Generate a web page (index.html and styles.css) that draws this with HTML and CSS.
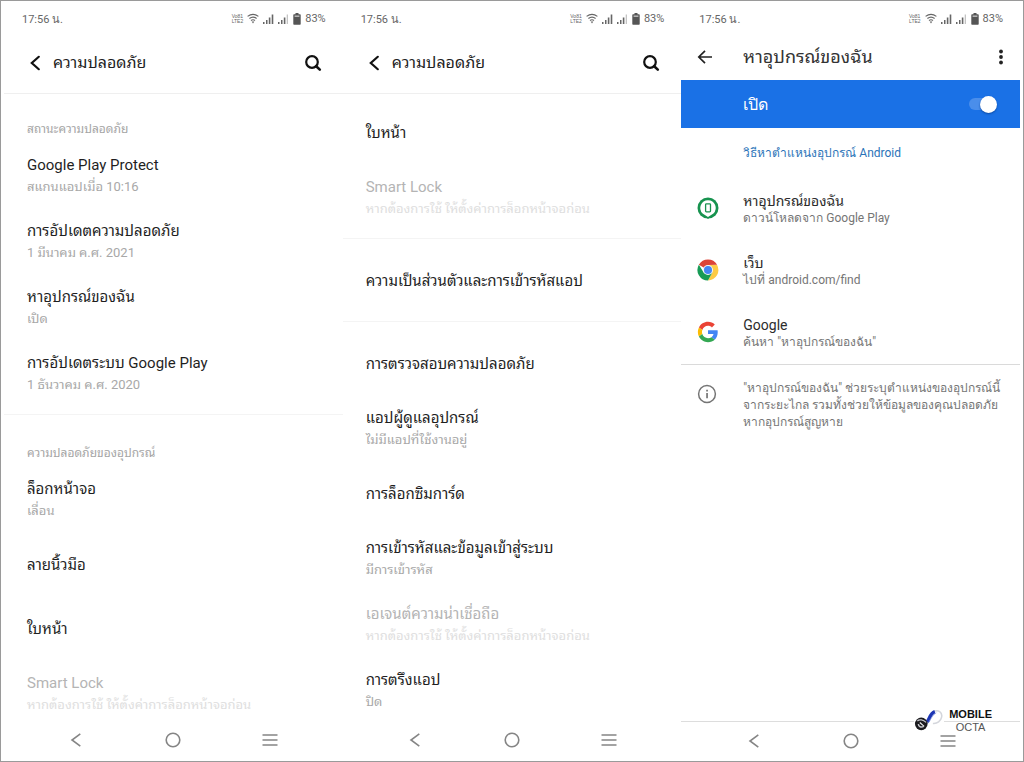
FILE: index.html
```html
<!DOCTYPE html>
<html lang="th">
<head>
<meta charset="utf-8">
<meta name="viewport" content="width=device-width, initial-scale=1">
<title>ความปลอดภัย</title>
<link rel="stylesheet" href="styles.css">
</head>
<body>
<svg class="sprite" aria-hidden="true">
  <symbol id="wifi" viewBox="0 0 12 11"><g fill="none" stroke="#666" stroke-width="1.2"><path d="M.6 3.4Q6-.8 11.4 3.4M2.4 5.5Q6 2.7 9.6 5.5M4 7.5Q6 6 8 7.5"/></g><path d="M4.700 8.600h2.600L6 10.400z" fill="#666"/></symbol>
  <symbol id="signal" viewBox="0 0 11 10"><path d="M0 8h1.500v2H0zM3 6h1.500v4H3zM5.800 3.500h1.600V10H5.800zM8.700 .5h1.600V10H8.700z" fill="#666"/></symbol>
  <symbol id="signal-low" viewBox="0 0 11 10"><path d="M0 8h1.500v2H0zM3 6h1.500v4H3zM5.800 3.500h1.600V10H5.800z" fill="#666"/><path d="M8.700 .5h1.300V10H8.700z" fill="#c4c4c4"/></symbol>
  <symbol id="battery" viewBox="0 0 8 12"><path d="M2.500 0h3v1.300h1.500q.7 0 .7.700v9q0 .7-.7.700H1q-.7 0-.7-.7V2q0-.7.700-.7h1.500z" fill="#555"/><path d="M1.600 2.600h4.800v1.100H1.600z" fill="#ddd"/></symbol>
  <symbol id="chevron" viewBox="0 0 12 16"><path d="M9.800 1.800 2.800 8l7 6.200" fill="none" stroke="#111" stroke-width="2.200" stroke-linecap="round"/></symbol>
  <symbol id="search" viewBox="0 0 18 18"><circle cx="8" cy="8" r="5.800" fill="none" stroke="#111" stroke-width="2.200"/><path d="m12.200 12.200 3.600 3.400" stroke="#111" stroke-width="2.600" stroke-linecap="round"/></symbol>
  <symbol id="nav-back" viewBox="0 0 16 16"><path d="M12.300 1.800 4 8l8.300 6.200" fill="none" stroke="#858585" stroke-width="1.600"/></symbol>
  <symbol id="nav-home" viewBox="0 0 16 16"><circle cx="8" cy="8" r="6.800" fill="none" stroke="#858585" stroke-width="1.600"/></symbol>
  <symbol id="nav-menu" viewBox="0 0 16 16"><path d="M.5 3h15M.5 8h15M.5 13h15" stroke="#858585" stroke-width="1.600"/></symbol>
</svg>

<main class="board">
  <section class="phone">
    <div class="status">
      <span>17:56 น.</span>
      <span class="status-icons">
        <span class="volte">Vo81<br>LTE2</span>
        <svg class="i-wifi"><use href="#wifi"/></svg>
        <svg class="i-signal"><use href="#signal"/></svg>
        <svg class="i-signal"><use href="#signal-low"/></svg>
        <svg class="i-battery"><use href="#battery"/></svg>
        <span>83%</span>
      </span>
    </div>
    <header class="head">
      <button class="icon-btn" aria-label="กลับ"><svg class="i-chevron"><use href="#chevron"/></svg></button>
      <h1>ความปลอดภัย</h1>
      <button class="icon-btn" aria-label="ค้นหา"><svg class="i-search"><use href="#search"/></svg></button>
    </header>
    <div class="content">
      <div class="group">
        <h2>สถานะความปลอดภัย</h2>
        <div class="item"><h3>Google Play Protect</h3><p>สแกนแอปเมื่อ 10:16</p></div>
        <div class="item"><h3>การอัปเดตความปลอดภัย</h3><p>1 มีนาคม ค.ศ. 2021</p></div>
        <div class="item"><h3>หาอุปกรณ์ของฉัน</h3><p>เปิด</p></div>
        <div class="item"><h3>การอัปเดตระบบ Google Play</h3><p>1 ธันวาคม ค.ศ. 2020</p></div>
      </div>
      <div class="group">
        <h2>ความปลอดภัยของอุปกรณ์</h2>
        <div class="item"><h3>ล็อกหน้าจอ</h3><p>เลื่อน</p></div>
        <div class="item single"><h3>ลายนิ้วมือ</h3></div>
        <div class="item single"><h3>ใบหน้า</h3></div>
        <div class="item off"><h3>Smart Lock</h3><p>หากต้องการใช้ ให้ตั้งค่าการล็อกหน้าจอก่อน</p></div>
      </div>
    </div>
    <nav class="nav">
      <button class="icon-btn" aria-label="ย้อนกลับ"><svg class="i-nav"><use href="#nav-back"/></svg></button>
      <button class="icon-btn" aria-label="หน้าแรก"><svg class="i-nav"><use href="#nav-home"/></svg></button>
      <button class="icon-btn" aria-label="เมนู"><svg class="i-nav"><use href="#nav-menu"/></svg></button>
    </nav>
  </section>

  <section class="phone">
    <div class="status">
      <span>17:56 น.</span>
      <span class="status-icons">
        <span class="volte">Vo81<br>LTE2</span>
        <svg class="i-wifi"><use href="#wifi"/></svg>
        <svg class="i-signal"><use href="#signal"/></svg>
        <svg class="i-signal"><use href="#signal-low"/></svg>
        <svg class="i-battery"><use href="#battery"/></svg>
        <span>83%</span>
      </span>
    </div>
    <header class="head">
      <button class="icon-btn" aria-label="กลับ"><svg class="i-chevron"><use href="#chevron"/></svg></button>
      <h1>ความปลอดภัย</h1>
      <button class="icon-btn" aria-label="ค้นหา"><svg class="i-search"><use href="#search"/></svg></button>
    </header>
    <div class="content">
      <div class="group">
        <div class="item single"><h3>ใบหน้า</h3></div>
        <div class="item off"><h3>Smart Lock</h3><p>หากต้องการใช้ ให้ตั้งค่าการล็อกหน้าจอก่อน</p></div>
      </div>
      <div class="group">
        <div class="item single"><h3>ความเป็นส่วนตัวและการเข้ารหัสแอป</h3></div>
      </div>
      <div class="group">
        <div class="item single"><h3>การตรวจสอบความปลอดภัย</h3></div>
        <div class="item"><h3>แอปผู้ดูแลอุปกรณ์</h3><p>ไม่มีแอปที่ใช้งานอยู่</p></div>
        <div class="item single"><h3>การล็อกซิมการ์ด</h3></div>
        <div class="item"><h3>การเข้ารหัสและข้อมูลเข้าสู่ระบบ</h3><p>มีการเข้ารหัส</p></div>
        <div class="item off"><h3>เอเจนต์ความน่าเชื่อถือ</h3><p>หากต้องการใช้ ให้ตั้งค่าการล็อกหน้าจอก่อน</p></div>
        <div class="item"><h3>การตรึงแอป</h3><p>ปิด</p></div>
      </div>
    </div>
    <nav class="nav">
      <button class="icon-btn" aria-label="ย้อนกลับ"><svg class="i-nav"><use href="#nav-back"/></svg></button>
      <button class="icon-btn" aria-label="หน้าแรก"><svg class="i-nav"><use href="#nav-home"/></svg></button>
      <button class="icon-btn" aria-label="เมนู"><svg class="i-nav"><use href="#nav-menu"/></svg></button>
    </nav>
  </section>

  <section class="phone">
    <div class="status">
      <span>17:56 น.</span>
      <span class="status-icons">
        <span class="volte">Vo81<br>LTE2</span>
        <svg class="i-wifi"><use href="#wifi"/></svg>
        <svg class="i-signal"><use href="#signal"/></svg>
        <svg class="i-signal"><use href="#signal-low"/></svg>
        <svg class="i-battery"><use href="#battery"/></svg>
        <span>83%</span>
      </span>
    </div>
    <header class="appbar">
      <button class="icon-btn lead" aria-label="กลับ"><svg class="i-arrow" viewBox="0 0 16 16"><path d="M15 8H2M8 1.800 1.800 8 8 14.200" fill="none" stroke="#222" stroke-width="1.700"/></svg></button>
      <h1>หาอุปกรณ์ของฉัน</h1>
      <button class="icon-btn" aria-label="ตัวเลือกเพิ่มเติม"><svg class="i-more" viewBox="0 0 6 16"><g fill="#222"><circle cx="3" cy="2.500" r="1.900"/><circle cx="3" cy="8" r="1.900"/><circle cx="3" cy="13.500" r="1.900"/></g></svg></button>
    </header>
    <div class="toggle">
      <label for="find">เปิด</label>
      <input class="switch" type="checkbox" role="switch" id="find" checked>
    </div>
    <div class="content">
      <a class="how" href="#how">วิธีหาตำแหน่งอุปกรณ์ Android</a>
      <div class="row">
        <span class="lead"><svg class="i-app" viewBox="0 0 22 22"><path d="M8 19h6l-3 3z" fill="#17934f"/><circle cx="11" cy="11" r="10.500" fill="#17934f"/><path d="M11 3.200a7.700 7.700 0 0 1 5.400 13.200L11 20l-5.400-3.600A7.700 7.700 0 0 1 11 3.200z" fill="#fff"/><rect x="8.600" y="6.800" width="4.900" height="8" rx=".8" fill="none" stroke="#17934f" stroke-width="1.300"/></svg></span>
        <div><h3>หาอุปกรณ์ของฉัน</h3><p>ดาวน์โหลดจาก Google Play</p></div>
      </div>
      <div class="row">
        <span class="lead"><svg class="i-app" viewBox="0 0 48 48"><path d="M24 24 4.080 12.500A23 23 0 0 1 43.920 12.500L24 13z" fill="#dc4437"/><path d="M24 13h19.920A23 23 0 0 1 24 47l9.500-17.500z" fill="#fdcb45"/><path d="M33.530 29.500 24 47A23 23 0 0 1 4.080 12.500l10.400 17z" fill="#179b56"/><circle cx="24" cy="24" r="11" fill="#f3f5f7"/><circle cx="24" cy="24" r="8.800" fill="#4385f4"/></svg></span>
        <div><h3>เว็บ</h3><p>ไปที่ android.com/find</p></div>
      </div>
      <div class="row">
        <span class="lead"><svg class="i-app" viewBox="0 0 52 52"><g transform="translate(2 2)"><path fill="#EA4335" d="M24 9.500c3.540 0 6.710 1.220 9.210 3.600l6.850-6.850C35.900 2.380 30.470 0 24 0 14.620 0 6.510 5.380 2.560 13.220l7.980 6.190C12.430 13.720 17.740 9.500 24 9.500z"/><path fill="#4285F4" d="M46.980 24.550c0-1.570-.15-3.090-.38-4.550H24v9.020h12.940c-.58 2.960-2.260 5.480-4.780 7.180l7.730 6c4.510-4.180 7.090-10.360 7.090-17.650z"/><path fill="#FBBC05" d="M10.530 28.590c-.48-1.450-.76-2.990-.76-4.590s.27-3.140.76-4.590l-7.980-6.190C.92 16.460 0 20.120 0 24c0 3.880.92 7.540 2.560 10.780l7.970-6.190z"/><path fill="#34A853" d="M24 48c6.480 0 11.930-2.130 15.890-5.810l-7.730-6c-2.150 1.450-4.920 2.300-8.160 2.300-6.260 0-11.570-4.220-13.470-9.910l-7.980 6.190C6.510 42.620 14.620 48 24 48z"/></g></svg></span>
        <div><h3>Google</h3><p>ค้นหา "หาอุปกรณ์ของฉัน"</p></div>
      </div>
      <div class="info">
        <span class="lead"><svg class="i-info" viewBox="0 0 20 20"><circle cx="10" cy="10" r="8.400" fill="none" stroke="#757575" stroke-width="1.500"/><path d="M9.200 9h1.700v5.300H9.200zM9.200 5.800h1.700v1.800H9.200z" fill="#757575"/></svg></span>
        <p>"หาอุปกรณ์ของฉัน" ช่วยระบุตำแหน่งของอุปกรณ์นี้<br>จากระยะไกล รวมทั้งช่วยให้ข้อมูลของคุณปลอดภัย<br>หากอุปกรณ์สูญหาย</p>
      </div>
    </div>
    <nav class="nav lined">
      <button class="icon-btn" aria-label="ย้อนกลับ"><svg class="i-nav"><use href="#nav-back"/></svg></button>
      <button class="icon-btn" aria-label="หน้าแรก"><svg class="i-nav"><use href="#nav-home"/></svg></button>
      <button class="icon-btn" aria-label="เมนู"><svg class="i-nav"><use href="#nav-menu"/></svg></button>
    </nav>
    <div class="brand">
      <svg class="i-brand" viewBox="0 0 32 24"><path d="M0 10h31v5H0z" fill="#fff"/><path d="M20 2.500C25-.5 29.500 3 28.500 8c-.8 4-4.500 7-9 6.500" fill="none" stroke="#d4d6dc" stroke-width="1.600"/><path d="M13.500 13C16 10.500 16.500 4 21.500 2.300" fill="none" stroke="#1d36b4" stroke-width="3.600"/><path d="M13 15.500C17 12.500 18 6 23 3.500" fill="none" stroke="#8b9ce0" stroke-width=".8"/><circle cx="7.500" cy="15" r="6.500" fill="#1b1b1f"/><path d="M3.500 12c2-2 6-1.500 9 1.500" fill="none" stroke="#c9c9ce" stroke-width="1.200"/><path d="M4.500 15c0 3 3 4 5.500 2.500" fill="none" stroke="#c9c9ce" stroke-width="1.500"/><path d="m6 13.500 4.500 4" stroke="#eee" stroke-width="1.200"/></svg>
      <span class="brand-text"><b>MOBILE</b><span>OCTA</span></span>
    </div>
  </section>
</main>
</body>
</html>
```

FILE: styles.css
```css
* { box-sizing: border-box; }

body {
  margin: 0;
  background: #fff;
  color: #1f1f1f;
  font-family: Roboto, sans-serif;
}

h1, h2, h3, p { margin: 0; font-weight: 400; }

h1, h2, h3, .item p { font-family: Roboto, "Noto Sans Thai Looped", sans-serif; }

svg { display: block; }

.sprite { position: absolute; width: 0; height: 0; }

.board {
  display: grid;
  grid-template-columns: repeat(3, 1fr);
  min-height: 100vh;
  padding: 0 3px;
  border: 1px solid #9a9a9a;
}

.phone {
  position: relative;
  display: flex;
  flex-direction: column;
  min-width: 0;
}

.icon-btn {
  display: flex;
  align-items: center;
  justify-content: center;
  padding: 0;
  border: 0;
  background: none;
}

/* Status bar */
.status {
  display: flex;
  align-items: center;
  justify-content: space-between;
  height: 35px;
  padding: 0 17px 0 18px;
  color: #666;
  font-size: 11px;
}

.status-icons { display: flex; align-items: center; gap: 4px; }
.volte { font: 5px/5px "Liberation Sans", sans-serif; }
.i-wifi { width: 12px; height: 11px; }
.i-signal { width: 11px; height: 10px; }
.i-battery { width: 8px; height: 12px; }

/* Settings header */
.head {
  display: flex;
  align-items: center;
  gap: 12px;
  height: 58px;
  padding: 0 21px 4px 25px;
  border-bottom: 1px solid #efefef;
}

.head h1 { flex: 1; font-size: 16px; line-height: 24px; }
.i-chevron { width: 12px; height: 16px; }
.i-search { width: 18px; height: 18px; }

/* Settings list */
.content { flex: 1; }

.group { padding: 10px 0 8px; }
.group:first-child { padding-top: 7px; }
.group:last-child { padding-bottom: 0; }
.group + .group { border-top: 1px solid #f4f4f4; }

.group h2 {
  padding: 18px 23px 4px;
  color: #a5a5a5;
  font-size: 12px;
  line-height: 20px;
}

.item { padding: 11px 23px; }
.item.single { padding: 21px 23px; }
.item:last-child:not(.single) { padding-bottom: 10px; }
.group:last-child .item:last-child { padding-bottom: 0; }
.item h3 { font-size: 15px; line-height: 22px; }
.item p { color: #a8a8a8; font-size: 13px; line-height: 22px; }
.item.off h3 { color: #b4b4b4; }
.item.off p { color: #dedede; }

/* Navigation bar */
.nav {
  display: flex;
  align-items: center;
  justify-content: center;
  gap: 81px;
  height: 40px;
  padding-bottom: 2px;
}

.nav.lined { border-top: 1px solid #ddd; }
.i-nav { width: 16px; height: 16px; }

/* Find My Device */
.lead { display: flex; flex: none; justify-content: flex-start; width: 46px; }

.appbar {
  display: flex;
  align-items: center;
  height: 44px;
  padding: 0 16px 2px;
}

.appbar h1 { flex: 1; color: #333; font-size: 18px; line-height: 26px; }
.i-arrow { width: 16px; height: 16px; }
.i-more { width: 6px; height: 16px; }

.toggle {
  display: flex;
  align-items: center;
  justify-content: space-between;
  height: 48px;
  padding: 0 23px 0 62px;
  background: #1a71e6;
  color: #fff;
  font-size: 16px;
}

.switch {
  appearance: none;
  display: flex;
  align-items: center;
  justify-content: flex-end;
  width: 28px;
  height: 12px;
  margin: 0;
  border-radius: 6px;
  background: #4a8eeb;
}

.switch::before {
  content: "";
  width: 17px;
  height: 17px;
  border-radius: 50%;
  background: #fff;
  box-shadow: 0 1px 2px #0c4aa3;
}

.how {
  display: block;
  padding: 15px 16px 15px 62px;
  color: #2b73b8;
  font-size: 12px;
  line-height: 20px;
  text-decoration: none;
}

.row {
  display: flex;
  padding: 14px 16px 13px;
}

.row h3 { color: #2c2c2c; font-size: 14px; line-height: 18px; }
.row p { color: #757575; font-size: 12px; line-height: 17px; }
.i-app { width: 22px; height: 22px; margin-top: 5px; }

.info {
  display: flex;
  padding: 15px 16px;
  border-top: 1px solid #dadada;
}

.info p { flex: 1; color: #757575; font-size: 12px; line-height: 17px; }
.i-info { width: 20px; height: 20px; margin-top: 4px; }

/* Watermark over the bottom corner */
.brand {
  position: absolute;
  right: 28px;
  bottom: 27px;
  display: flex;
  align-items: center;
  gap: 4px;
}

.i-brand { width: 31px; height: 24px; }

.brand-text {
  display: flex;
  flex-direction: column;
  align-items: center;
  color: #111;
  font: 11px/13px "Liberation Sans", sans-serif;
}

.brand-text span { color: #555; }
```
